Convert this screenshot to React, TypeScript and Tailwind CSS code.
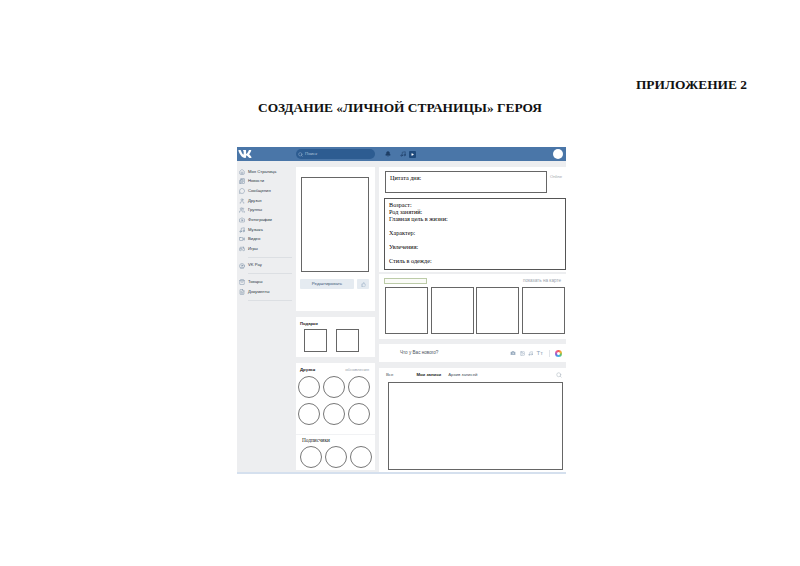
import { Bell, Camera, CircleUser, FileText, Gamepad2, Home, Image, MessageCircle, Music, Newspaper, Play, Search, ShoppingBag, ThumbsUp, User, Users, Video } from "lucide-react";
import { FaVk } from "react-icons/fa";

const menuTop = [
  { icon: Home, label: "Моя Страница" },
  { icon: Newspaper, label: "Новости" },
  { icon: MessageCircle, label: "Сообщения" },
  { icon: User, label: "Друзья" },
  { icon: Users, label: "Группы" },
  { icon: Camera, label: "Фотографии" },
  { icon: Music, label: "Музыка" },
  { icon: Video, label: "Видео" },
  { icon: Gamepad2, label: "Игры" },
];

function MenuItem({ icon: Icon, label }: { icon: typeof Home; label: string }) {
  return (
    <div className="flex h-[9.65px] items-center gap-[3px] text-[4.2px] text-[#2b3644]">
      <Icon size={6} strokeWidth={1.8} className="text-[#6f869f]" />
      <span>{label}</span>
    </div>
  );
}

function Circle() {
  return <div className="size-[22px] rounded-full border border-[#777]" />;
}

function Square({ className }: { className: string }) {
  return <div className={`border border-[#666] bg-white ${className}`} />;
}

export default function App() {
  return (
    <div className="h-[566px] w-[800px] overflow-hidden bg-white font-['Liberation_Sans',sans-serif]">
      {/* document headings */}
      <div className="pt-[77px] font-['Liberation_Serif',serif] font-bold text-[#111]">
        <div className="pr-[53px] text-right text-[13.4px] leading-4">ПРИЛОЖЕНИЕ 2</div>
        <div className="mt-[7px] text-center text-[13.4px] leading-4">СОЗДАНИЕ «ЛИЧНОЙ СТРАНИЦЫ» ГЕРОЯ</div>
      </div>

      {/* page mock-up */}
      <div className="ml-[237px] mt-[31px] w-[329px]">
        <header className="flex h-[14px] items-center bg-[#4a76a8]">
          <FaVk className="ml-[1px] h-[14px] w-[14px] text-white" />
          <div className="ml-[44px] flex h-[10px] w-[79px] items-center gap-[2px] rounded-full bg-[#2d5c91] pl-[2px] text-[4.4px] text-[#a9c0da]">
            <Search size={5} strokeWidth={2} />
            <span>Поиск</span>
          </div>
          <Bell size={6} fill="#1f3f66" className="ml-[10px] text-[#1f3f66]" />
          <Music size={6} strokeWidth={2.2} className="ml-[9px] text-[#1f3f66]" />
          <div className="ml-[3px] flex size-[7px] items-center justify-center rounded-[1px] bg-[#1f4a7c]">
            <Play size={3} fill="white" className="text-white" />
          </div>
          <div className="ml-[137px] size-[10px] rounded-full bg-white" />
        </header>

        <div className="flex h-[311px] bg-[#edeef0]">
          <aside className="w-[59px] shrink-0 pl-[2px] pt-[6px]">
            {menuTop.map((item) => (
              <MenuItem key={item.label} {...item} />
            ))}
            <div className="my-[3px] ml-[9px] mr-[4px] border-t border-[#dcdfe3]" />
            <MenuItem icon={CircleUser} label="VK Pay" />
            <div className="my-[3px] ml-[9px] mr-[4px] border-t border-[#dcdfe3]" />
            <MenuItem icon={ShoppingBag} label="Товары" />
            <MenuItem icon={FileText} label="Документы" />
            <div className="my-[3px] ml-[9px] mr-[4px] border-t border-[#dcdfe3]" />
          </aside>

          <div className="mt-[6px] flex w-[79px] shrink-0 flex-col gap-[6px]">
            <section className="h-[144px] bg-white px-[4px] pt-[10px]">
              <Square className="ml-[1px] h-[95px] w-[68px]" />
              <div className="mt-[7px] flex gap-[3px]">
                <div className="flex h-[10px] w-[54px] items-center justify-center rounded-[1px] bg-[#e5ebf1] text-[4.4px] text-[#3d5a7a]">
                  Редактировать
                </div>
                <div className="flex h-[10px] w-[12px] items-center justify-center rounded-[1px] bg-[#e5ebf1]">
                  <ThumbsUp size={5} className="text-[#9fb2c7]" />
                </div>
              </div>
            </section>

            <section className="h-[40px] bg-white px-[4px] pt-[4px]">
              <div className="text-[4.2px] font-bold leading-[6px] text-[#222]">Подарки</div>
              <div className="ml-[4px] mt-[2px] flex gap-[9px]">
                <Square className="size-[23px]" />
                <Square className="size-[23px]" />
              </div>
            </section>

            <section className="h-[107px] bg-white">
              <div className="flex justify-between pl-[4px] pr-[6px] pt-[4px] text-[4.3px] leading-[6px]">
                <span className="font-bold text-[#222]">Друзья</span>
                <span className="text-[#9aa3ad]">обновления</span>
              </div>
              <div className="ml-[2px] mt-[3px] grid w-[73px] grid-cols-3 gap-x-[2.5px] gap-y-[5px]">
                {[0, 1, 2, 3, 4, 5].map((i) => (
                  <Circle key={i} />
                ))}
              </div>
              <div className="mt-[9px] border-t border-[#f1f2f4] pl-[6px] pt-[1px] font-['Liberation_Serif',serif] text-[5.3px] leading-[8px] text-[#222]">
                Подписчики
              </div>
              <div className="ml-[4px] mt-[2px] flex gap-[3px]">
                <Circle />
                <Circle />
                <Circle />
              </div>
            </section>
          </div>

          <div className="ml-[4px] mt-[6px] flex w-[187px] shrink-0 flex-col">
            <section className="h-[105px] bg-white pt-[4px]">
              <div className="flex items-start">
                <div className="ml-[6px] h-[22px] w-[162px] border border-[#666] pl-[4px] pt-[2px] font-['Liberation_Serif',serif] text-[6.2px] leading-[7px] text-black">
                  Цитата дня:
                </div>
                <span className="ml-[3px] mt-[3px] text-[4.2px] text-[#a0a6ad]">Online</span>
              </div>
              <div className="ml-[5px] mt-[5px] h-[72px] border border-[#555] pl-[4px] pt-[2px] font-['Liberation_Serif',serif] text-[6.2px] leading-[7px] text-black">
                <div>Возраст:</div>
                <div>Род занятий:</div>
                <div>Главная цель в жизни:</div>
                <div className="mt-[7px]">Характер:</div>
                <div className="mt-[7px]">Увлечения:</div>
                <div className="mt-[7px]">Стиль в одежде:</div>
              </div>
            </section>

            <section className="mt-[2px] h-[65px] bg-white pt-[4px]">
              <div className="flex items-center justify-between pr-[5px]">
                <div className="ml-[5px] h-[6px] w-[43px] border border-[#bccba8] bg-[#fbfcf8]" />
                <span className="text-[4.6px] text-[#9aa3ad]">показать на карте</span>
              </div>
              <div className="ml-[6px] mr-[1px] mt-[2px] flex justify-between">
                <Square className="h-[47px] w-[43px]" />
                <Square className="h-[47px] w-[43px]" />
                <Square className="h-[47px] w-[43px]" />
                <Square className="h-[47px] w-[43px]" />
              </div>
            </section>

            <section className="mt-[5px] flex h-[18px] items-center bg-white pl-[21px] text-[4.6px] text-[#4a5560]">
              <span>Что у Вас нового?</span>
              <div className="ml-auto flex items-center gap-[3.5px] text-[#8fa3b8]">
                <Camera size={6} fill="#8fa3b8" stroke="white" strokeWidth={1.5} />
                <Image size={5} strokeWidth={2} />
                <Music size={5} strokeWidth={2} />
                <span className="text-[6px] leading-none">Tт</span>
                <div className="mx-[2px] h-[7px] border-l border-[#e1e5ea]" />
                <div className="mr-[4px] flex size-[7px] items-center justify-center rounded-full bg-[conic-gradient(#f25c5c,#f7b733,#5cc26b,#45b6e8,#6a6fe0,#e25ca8,#f25c5c)]">
                  <div className="size-[3px] rounded-full bg-white" />
                </div>
              </div>
            </section>

            <section className="mt-[6px] flex-1 bg-white">
              <div className="flex h-[14px] items-center pl-[7px] pr-[4px] text-[4.3px] text-[#4a5560]">
                <span>Все</span>
                <span className="ml-[23px] font-bold text-[#222]">Мои записи</span>
                <span className="ml-[7px]">Архив записей</span>
                <Search size={6} className="ml-auto text-[#a6b0bb]" />
              </div>
              <Square className="ml-[9px] h-[88px] w-[175px]" />
            </section>
          </div>
        </div>
        <div className="h-[2px] bg-[#d5e0ee]" />
      </div>
    </div>
  );
}
